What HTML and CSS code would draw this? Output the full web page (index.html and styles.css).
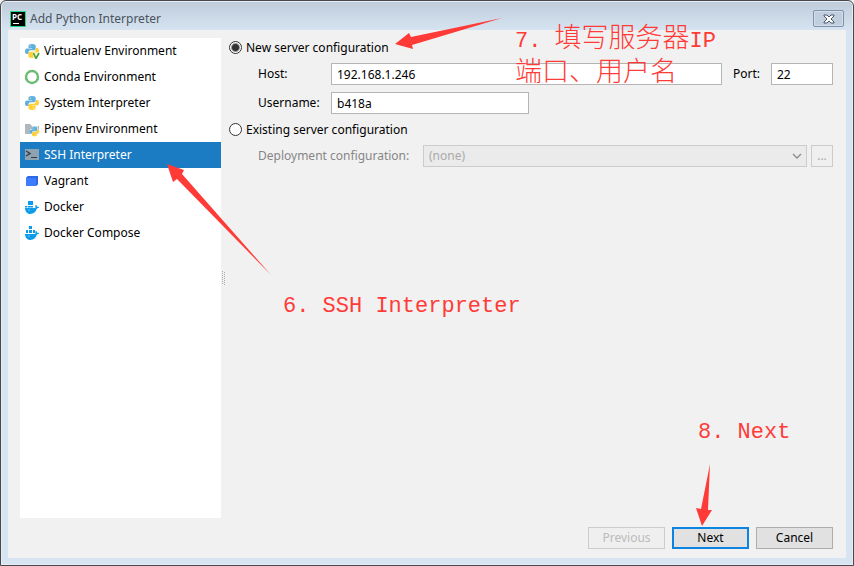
FILE: index.html
```html
<!DOCTYPE html>
<html lang="en">
<head>
<meta charset="utf-8">
<title>Add Python Interpreter</title>
<link rel="stylesheet" href="styles.css">
</head>
<body>
<svg class="defs" aria-hidden="true">
  <symbol id="python" viewBox="0 0 16 16">
    <path fill="#5fb0dc" d="M8 1C5.400 1 4.500 1.800 4.500 3v2h3.700v.4H3C1.600 5.400 1 6.500 1 8.200S1.600 11 3 11h1.500V9.300c0-1.200.9-2.100 2.100-2.100h3.300c1 0 1.800-.8 1.800-1.800V3C11.700 1.700 10.600 1 8 1z"/>
    <path fill="#ffd02f" d="M8 15c2.600 0 3.500-.8 3.500-2v-2H7.800v-.4H13c1.400 0 2-1.100 2-2.800S14.400 5 13 5h-1.300v1.700c0 1.200-.9 2.100-2.100 2.100H6.300c-1 0-1.800.8-1.800 1.800V13c0 1.300 1 2 3.500 2z"/>
    <circle cx="6.400" cy="3" r=".5" fill="#fff"/><circle cx="9.700" cy="13" r=".5" fill="#fff"/>
  </symbol>
  <symbol id="whale" viewBox="0 0 16 16">
    <path fill="#0d9bea" d="M1 9h9.800c.5 0 .8-.4.600-1-.3-.8 0-1.500.6-2.200.8.500 1.100 1.200 1 2 .8-.2 1.500-.1 2.200.3-.4 1-1.200 1.400-2.300 1.500-1 3.400-3.200 5.400-6.500 5.400C3.100 15 1.200 12.500 1 9z"/>
    <circle cx="5" cy="11" r=".5" fill="#fff"/>
  </symbol>
</svg>

<main class="window">
  <header class="titlebar">
    <svg class="icon" viewBox="0 0 16 16" aria-hidden="true">
      <rect width="16" height="16" fill="#21d789"/><rect x="1" y="1" width="14" height="14" fill="#000"/>
      <text class="logo-text" x="2" y="9">PC</text><rect x="3" y="12" width="6" height="1" fill="#fff"/>
    </svg>
    <h1 class="title">Add Python Interpreter</h1>
    <button class="close" type="button" aria-label="Close">
      <svg viewBox="0 0 12 10" aria-hidden="true"><path d="M1 1h3l2 2 2-2h3v1L8 5l3 3v1H8L6 7 4 9H1V8l3-3-3-3z" fill="#fff" stroke="#4b5566"/></svg>
    </button>
  </header>

  <form class="dialog">
    <div class="columns">
      <nav class="kinds" aria-label="Interpreter type">
        <button class="kind" type="button">
          <svg class="icon" viewBox="0 0 16 16"><use href="#python"/><path d="M9 9h7v7H9z" fill="#fff" opacity=".6"/><path d="M9.500 10l2.500 5.500L15 10" fill="none" stroke="#4fa53c" stroke-width="1.800"/></svg>Virtualenv Environment</button>
        <button class="kind" type="button">
          <svg class="icon" viewBox="0 0 16 16"><circle cx="8" cy="8" r="6" fill="none" stroke="#62b96a" stroke-width="2.400"/><circle cx="8" cy="8" r="6.200" fill="none" stroke="#fff" stroke-width=".6" stroke-dasharray="1 2" opacity=".5"/></svg>Conda Environment</button>
        <button class="kind" type="button">
          <svg class="icon" viewBox="0 0 16 16"><use href="#python"/></svg>System Interpreter</button>
        <button class="kind" type="button">
          <svg class="icon" viewBox="0 0 16 16"><path d="M1 3h5l2 2h7v8H1z" fill="#adb8c0"/><path d="M6 8h2V5h6v3h2v8H6z" fill="#fff" opacity=".6"/><use href="#python" x="5" y="5" width="11" height="11"/></svg>Pipenv Environment</button>
        <button class="kind selected" type="button" aria-current="true">
          <svg class="icon" viewBox="0 0 16 16"><path d="M1 2h14v11H1z" fill="#8fa2b1"/><path d="M2 4l4 2.500L2 9" fill="none" stroke="#343c43" stroke-width="1.400"/><path d="M7 10.500h6" stroke="#343c43"/></svg>SSH Interpreter</button>
        <button class="kind" type="button">
          <svg class="icon" viewBox="0 0 16 16"><path d="M2 5l2-2h10v8l-2 2H2z" fill="#3e7cff"/><path d="M2 5l2-2h10l-2 2zM12 5l2-2v8l-2 2z" fill="#2d68e8"/></svg>Vagrant</button>
        <button class="kind" type="button">
          <svg class="icon" viewBox="0 0 16 16"><use href="#whale"/><path d="M4 2h5v4H4zM1 7h2.500v1.500H1zM4 7h5v1.500H4z" fill="#0d9bea"/></svg>Docker</button>
        <button class="kind" type="button">
          <svg class="icon" viewBox="0 0 16 16"><use href="#whale"/><path d="M5 1h3v3H5zM2 5h2v3H2zM5 5h3v3H5zM9 5h2v3H9z" fill="#0d9bea"/></svg>Docker Compose</button>
      </nav>
      <div class="splitter" aria-hidden="true">
        <svg width="4" height="14" viewBox="0 0 4 14"><path d="M.5 0v14M2.500 1v13" stroke="#aaa" stroke-dasharray="1 1"/></svg>
      </div>

      <section class="settings">
        <label class="choice"><input type="radio" name="server" checked>New server configuration</label>
        <div class="row">
          <label class="caption" for="host">Host:</label>
          <input class="field host" id="host" type="text" value="192.168.1.246">
          <label for="port">Port:</label>
          <input class="field port" id="port" type="text" value="22">
        </div>
        <div class="row">
          <label class="caption" for="user">Username:</label>
          <input class="field user" id="user" type="text" value="b418a">
        </div>
        <label class="choice"><input type="radio" name="server">Existing server configuration</label>
        <div class="row deploy">
          <label for="deployment">Deployment configuration:</label>
          <span class="combo">
            <select class="field" id="deployment" disabled><option>(none)</option></select>
            <svg class="chevron" viewBox="0 0 10 6" aria-hidden="true"><path d="M1 1l4 4 4-4" fill="none" stroke="#8c8c8c" stroke-width="1.300"/></svg>
          </span>
          <button class="more" type="button" aria-label="Browse" disabled>...</button>
        </div>
      </section>
    </div>

    <footer class="actions">
      <button class="action" type="button" disabled>Previous</button>
      <button class="action primary" type="button">Next</button>
      <button class="action" type="button">Cancel</button>
    </footer>
  </form>

  <svg class="arrows" width="854" height="566" viewBox="0 0 854 566" aria-hidden="true">
    <path d="M395 44l14-11 2 4 91-19-90 27 1 4z"/>
    <path d="M167 164l17 6-2 4 89 101-94-96-4 3z"/>
    <path d="M702 526l-6-18 5 1 9-45-2 46h4z"/>
  </svg>
  <p class="note note-server"><span class="latin">7. </span>填写服务器<span class="latin">IP</span><br>端口、用户名</p>
  <p class="note note-ssh"><span class="latin">6. SSH Interpreter</span></p>
  <p class="note note-next"><span class="latin">8. Next</span></p>
</main>
</body>
</html>
```
FILE: styles.css
```css
* { box-sizing: border-box; }

body {
  margin: 0;
  background: #f1f1f1;
  color: #000;
  font: 12px/16px "Noto Sans", "Open Sans", sans-serif;
}

button, input, select { font: inherit; color: inherit; }

.defs { position: absolute; width: 0; height: 0; }
.icon { flex: none; width: 16px; height: 16px; }

.window {
  position: relative;
  display: flex;
  flex-direction: column;
  min-height: 100vh;
  padding: 0 7px 7px;
  border: 1px solid #4b484b;
  border-radius: 6px 6px 0 0;
  background: linear-gradient(#becbda, #d7e4f1 30px);
  box-shadow: inset 0 0 0 1px #e6eef7;
}

.titlebar {
  display: flex;
  align-items: center;
  gap: 4px;
  height: 29px;
  padding: 6px 2px 0;
}
.title { flex: 1; margin: 0; color: #4a545e; font-size: 12px; font-weight: 400; }
.logo-text { fill: #fff; font: bold 8px "Open Sans", sans-serif; }
.close {
  width: 31px;
  height: 17px;
  padding: 0;
  border: 1px solid #8291aa;
  border-radius: 2px;
  background: #c0cede;
  box-shadow: inset 0 0 0 1px #d3deeb;
}
.close svg { display: block; width: 12px; height: 10px; margin: auto; }

.dialog {
  flex: 1;
  display: flex;
  flex-direction: column;
  padding: 8px 13px 9px 12px;
  background: #f1f1f1;
}
.columns { flex: 1; display: flex; }

.kinds { width: 201px; background: #fff; }
.kind {
  display: flex;
  align-items: center;
  gap: 4px;
  width: 100%;
  height: 26px;
  padding: 0 4px;
  border: 0;
  background: none;
}
.selected { background: #1b7cc4; color: #fff; }
.splitter { display: flex; align-items: center; width: 8px; padding-left: 1px; }

.settings { flex: 1; min-width: 0; }
.choice { display: flex; align-items: center; gap: 4px; height: 19px; }
.choice input {
  appearance: none;
  width: 13px;
  height: 13px;
  margin: 0;
  border: 1px solid #333;
  border-radius: 50%;
  background: #fff;
}
.choice input:checked { background: radial-gradient(circle, #333 0 3px, #fff 5px); }

.row { display: flex; align-items: center; gap: 11px; margin: 6px 0 7px 29px; }
.row + .row { margin-bottom: 6px; }
.caption { width: 62px; }
.field {
  height: 22px;
  padding: 0 5px;
  border: 1px solid #b5b5b5;
  border-radius: 0;
  background: #fff;
}
.host { flex: 1; min-width: 0; }
.port { width: 62px; }
.user { width: 198px; }

.deploy { gap: 4px; color: #868686; }
.deploy label { width: 161px; }
.combo { position: relative; flex: 1; display: flex; }
.combo .field {
  appearance: none;
  width: 100%;
  border-color: #ccc;
  background: #ebebeb;
  color: #aaa;
  opacity: 1;
}
.chevron { position: absolute; right: 5px; top: 8px; width: 10px; height: 6px; }
.more { width: 22px; height: 22px; padding: 0; border: 1px solid #ccc; background: #efefef; color: #aaa; }

.actions { display: flex; justify-content: flex-end; gap: 7px; margin-top: 9px; }
.action { width: 77px; height: 22px; padding: 0; border: 1px solid #adadad; background: #e1e1e1; }
.action:disabled { border-color: #ccc; background: #efefef; color: #bbb; }
.primary { border: 2px solid #0a84e0; }

.arrows { position: absolute; left: -1px; top: -1px; fill: #ff3b38; pointer-events: none; }
.note {
  position: absolute;
  margin: 0;
  color: #ff3b38;
  font: 300 27px/34px "Noto Sans CJK SC", sans-serif;
  white-space: pre;
  pointer-events: none;
}
.latin { font: 22px/1 "Liberation Mono", monospace; }
.note-server { left: 514px; top: 18px; }
.note-ssh { left: 282px; top: 283px; }
.note-next { left: 697px; top: 409px; }
```
